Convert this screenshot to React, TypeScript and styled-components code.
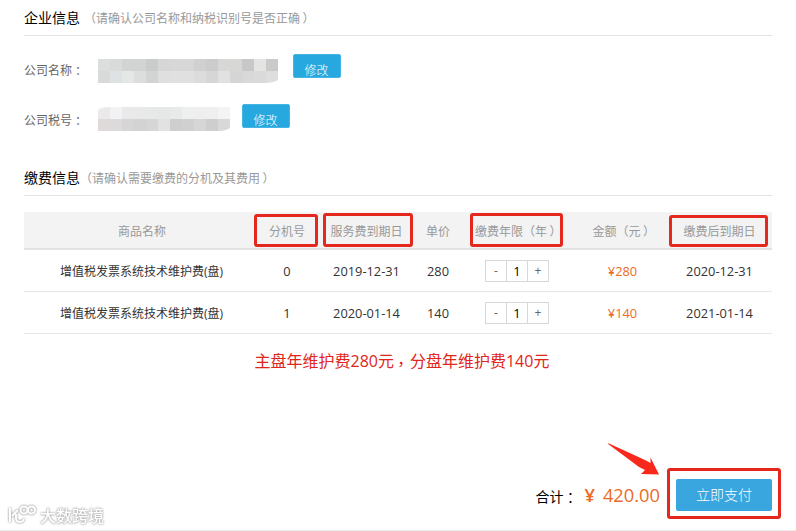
import React from "react";
import styled, { createGlobalStyle } from "styled-components";

const GlobalStyle = createGlobalStyle`
  * {
    box-sizing: border-box;
  }

  body {
    margin: 0;
    background: #fff;
    overflow: hidden;
    font-family: "Open Sans", "Noto Sans CJK SC", sans-serif;
    font-size: 12px;
    color: #333;
    text-spacing-trim: space-all;
  }
`;

const Page = styled.main`
  position: relative;
  display: flex;
  flex-direction: column;
  width: 796px;
  height: 531px;
  padding: 0 24px;
  border-bottom: 1px solid #ececec;
`;

const SectionHeader = styled.header<{ $gap: number }>`
  display: flex;
  align-items: center;
  gap: ${({ $gap }) => $gap}px;
  height: 36px;
  border-bottom: 1px solid #e3e3e3;
  white-space: nowrap;
`;

const SectionTitle = styled.h2`
  margin: 0;
  font-size: 14px;
  line-height: 20px;
  font-weight: 400;
  color: #000;
`;

const SectionHint = styled.span`
  padding-top: 2px;
  line-height: 20px;
  color: #999;
`;

// full-width punctuation that sits closer to the middle of its box
const Mark = styled.span<{ $x: number; $y: number }>`
  display: inline-block;
  font-family: "Noto Sans CJK TC", sans-serif;
  line-height: 1;
  transform: translate(${({ $x }) => $x}px, ${({ $y }) => $y}px);
`;

const CompanyInfo = styled.div`
  display: flex;
  flex-direction: column;
  gap: 26px;
  height: 124px;
  padding-top: 18px;
`;

const InfoRow = styled.div`
  display: flex;
  height: 24px;
`;

const InfoLabel = styled.span`
  width: 74px;
  padding-top: 7px;
  line-height: 20px;
  color: #666;
`;

const Mosaic = styled.div<{ $columns: number; $top: number; $radius: string }>`
  display: grid;
  grid-template-columns: repeat(${({ $columns }) => $columns}, 12px);
  grid-auto-rows: 12px;
  align-self: flex-start;
  margin-top: ${({ $top }) => $top}px;
  border-radius: ${({ $radius }) => $radius};
  overflow: hidden;
`;

const Tile = styled.i<{ $tone: string }>`
  background: #${({ $tone }) => $tone};
`;

const EditButton = styled.button<{ $gap: number }>`
  width: 48px;
  height: 24px;
  margin-left: ${({ $gap }) => $gap}px;
  padding: 6px 1px 0 0;
  border: 1px solid #45b5e3;
  border-radius: 2px;
  background: #27a9e0;
  color: #fff;
  font: 300 12px/18px "Noto Sans CJK SC", sans-serif;
  overflow: hidden;
`;

const FeeTable = styled.div`
  margin-top: 16px;
`;

const TableRow = styled.div<{ $head?: boolean }>`
  display: grid;
  grid-template-columns: 236px 54px 105px 38px 120px 91px 103px;
  align-items: center;
  height: ${({ $head }) => ($head ? 38 : 42)}px;
  border-bottom: ${({ $head }) => ($head ? "2px solid #e2e2e2" : "1px solid #e6e6e6")};
  background: ${({ $head }) => ($head ? "#f3f3f3" : "#fff")};
  color: ${({ $head }) => ($head ? "#999" : "#333")};
  line-height: 20px;
  text-align: center;
  white-space: nowrap;
`;

const HeadCell = styled.span`
  justify-self: center;
  padding-top: 3px;
`;

const NameCell = styled.span`
  padding: 2px 1px 0 0;
`;

const NumberCell = styled.span<{ $price?: boolean }>`
  font-size: 12.8px;
  color: ${({ $price }) => ($price ? "#ed6a26" : "#333")};
`;

const Stepper = styled.div`
  display: grid;
  grid-template-columns: 20px 22px 20px;
  justify-self: center;
  width: 64px;
  height: 22px;
  border: 1px solid #d8d8d8;
  line-height: 20px;
`;

const StepButton = styled.span`
  color: #666;
`;

const StepValue = styled.span`
  border: solid #d8d8d8;
  border-width: 0 1px;
  color: #000;
  font-size: 13px;
`;

const Note = styled.p`
  margin: 15px 0 0 230.5px;
  font-size: 16px;
  line-height: 24px;
  color: #e1251b;
  white-space: nowrap;
`;

const Footer = styled.footer`
  display: flex;
  align-items: center;
  justify-content: flex-end;
  height: 32px;
  margin-top: auto;
  margin-bottom: 19px;
  white-space: nowrap;
`;

const TotalLabel = styled.span`
  margin-right: 7px;
  padding-top: 3px;
  font-size: 14px;
  line-height: 20px;
  color: #000;
`;

const TotalAmount = styled.span`
  display: flex;
  gap: 8px;
  margin: -2px 16px 0 0;
  font-size: 18.3px;
  color: #ed6a26;
`;

const Currency = styled.span`
  font-weight: 600;
`;

const PayButton = styled.button`
  width: 96px;
  height: 32px;
  padding: 0 0 2px;
  border: 0;
  border-radius: 2px;
  background: #3aa6df;
  color: #fff;
  font: 300 14px/28px "Noto Sans CJK SC", sans-serif;
`;

const Marker = styled.div<{ $x: number; $y: number; $w: number; $h: number }>`
  position: absolute;
  left: ${({ $x }) => $x}px;
  top: ${({ $y }) => $y}px;
  width: ${({ $w }) => $w}px;
  height: ${({ $h }) => $h}px;
  border: 3px solid #e5281e;
  border-radius: 3px;
  pointer-events: none;
`;

const Arrow = styled.svg`
  position: absolute;
  left: 600px;
  top: 438px;
`;

const Watermark = styled.div`
  position: absolute;
  left: 8px;
  top: 503px;
  display: flex;
  align-items: center;
  gap: 2px;
  height: 24px;
  color: #fff;
  font: 500 16px/24px "Noto Sans CJK SC", sans-serif;
  filter: drop-shadow(0 0 1px #aaa) drop-shadow(0 0 0.5px #bbb);
`;

const nameTiles = [
  "dcdede d9dbda d2d3d3 d2d3d3 cacccc d6d6d6 d7d7d7 d7d7d7 d0d0d0 cccccc d7d7d6 d7d7d6 c8c8c8 e4e4e2 cacaca",
  "d8d9d9 dfe2e4 e5e6e6 dcdddd d2d3d3 dfdfdf e0e0e0 e0e0e0 dcdcdc d6d6d6 e1e1e1 d5d5d5 d8d8d8 dadada dedede",
].join(" ").split(" ");

const taxTiles = [
  "ebe9e9 f1f2f3 e9e9e9 e9e9e9 e7e8e8 e6e8e7 e8e9e9 eeefef eeeeee efefef f3f4f4",
  "dedada dcdada d6d6d6 d3d3d3 d6d6d6 e2e2e2 cecece d0d0d0 d6d6d6 cecece d8d8d8",
].join(" ").split(" ");

const headings = ["商品名称", "分机号", "服务费到期日", "单价", "缴费年限（年）", "金额（元）", "缴费后到期日"];

const fees = [
  { ext: 0, due: "2019-12-31", price: 280, next: "2020-12-31" },
  { ext: 1, due: "2020-01-14", price: 140, next: "2021-01-14" },
];

const offsets: Record<string, [number, number]> = {
  "（": [0, 0],
  "）": [2.5, 0],
  "：": [0, 1],
  "，": [-1, 3],
};

const Text: React.FC<{ children: string }> = ({ children }) => (
  <>
    {children.split(/([（）：，])/).map((part, i) =>
      i % 2 ? <Mark key={i} $x={offsets[part][0]} $y={offsets[part][1]}>{part}</Mark> : part
    )}
  </>
);

const App: React.FC = () => {
  return (
    <Page>
      <GlobalStyle />
      <SectionHeader $gap={4}>
        <SectionTitle>企业信息</SectionTitle>
        <SectionHint><Text>（请确认公司名称和纳税识别号是否正确）</Text></SectionHint>
      </SectionHeader>

      <CompanyInfo>
        <InfoRow>
          <InfoLabel><Text>公司名称：</Text></InfoLabel>
          <Mosaic $columns={15} $top={5} $radius="0 0 14px 0 / 0 0 4px 0">
            {nameTiles.map((tone, i) => <Tile key={i} $tone={tone} />)}
          </Mosaic>
          <EditButton $gap={15}>修改</EditButton>
        </InfoRow>
        <InfoRow>
          <InfoLabel><Text>公司税号：</Text></InfoLabel>
          <Mosaic $columns={11} $top={3} $radius="12px 0 12px 0 / 4px 0 4px 0">
            {taxTiles.map((tone, i) => <Tile key={i} $tone={tone} />)}
          </Mosaic>
          <EditButton $gap={12}>修改</EditButton>
        </InfoRow>
      </CompanyInfo>

      <SectionHeader $gap={0}>
        <SectionTitle>缴费信息</SectionTitle>
        <SectionHint><Text>（请确认需要缴费的分机及其费用）</Text></SectionHint>
      </SectionHeader>

      <FeeTable>
        <TableRow $head>
          {headings.map((heading) => (
            <HeadCell key={heading}><Text>{heading}</Text></HeadCell>
          ))}
        </TableRow>
        {fees.map((fee) => (
          <TableRow key={fee.ext}>
            <NameCell>增值税发票系统技术维护费(盘)</NameCell>
            <NumberCell>{fee.ext}</NumberCell>
            <NumberCell>{fee.due}</NumberCell>
            <NumberCell>{fee.price}</NumberCell>
            <Stepper>
              <StepButton>-</StepButton>
              <StepValue>1</StepValue>
              <StepButton>+</StepButton>
            </Stepper>
            <NumberCell $price>¥{fee.price}</NumberCell>
            <NumberCell>{fee.next}</NumberCell>
          </TableRow>
        ))}
      </FeeTable>

      <Note><Text>主盘年维护费280元，分盘年维护费140元</Text></Note>

      <Footer>
        <TotalLabel><Text>合计：</Text></TotalLabel>
        <TotalAmount>
          <Currency>¥</Currency>
          <span>420.00</span>
        </TotalAmount>
        <PayButton>立即支付</PayButton>
      </Footer>

      <Marker $x={254} $y={214} $w={64} $h={33} />
      <Marker $x={323} $y={213} $w={90} $h={34} />
      <Marker $x={470} $y={213} $w={93} $h={34} />
      <Marker $x={669} $y={215} $w={99} $h={32} />
      <Marker $x={667} $y={468} $w={114} $h={51} />

      <Arrow width="66" height="42" viewBox="0 0 66 42">
        <path d="M7.5 5.5 L9 5.5 L45 22 L50.5 25 L50.5 19.5 L59 36.5 L41 36 L45 32 L39 29 Z" fill="#f8281c" />
      </Arrow>

      <Watermark>
        <svg width="30" height="22" viewBox="0 0 30 22" fill="none" stroke="#fff" strokeWidth="2">
          <path d="M2 4v14M10 6l-6 6M8 10v4q0 4 4 4 3 0 4-3" />
          <circle cx="16" cy="6" r="3.5" />
          <circle cx="23.5" cy="6" r="3.5" />
        </svg>
        大数跨境
      </Watermark>
    </Page>
  );
};

export default App;
